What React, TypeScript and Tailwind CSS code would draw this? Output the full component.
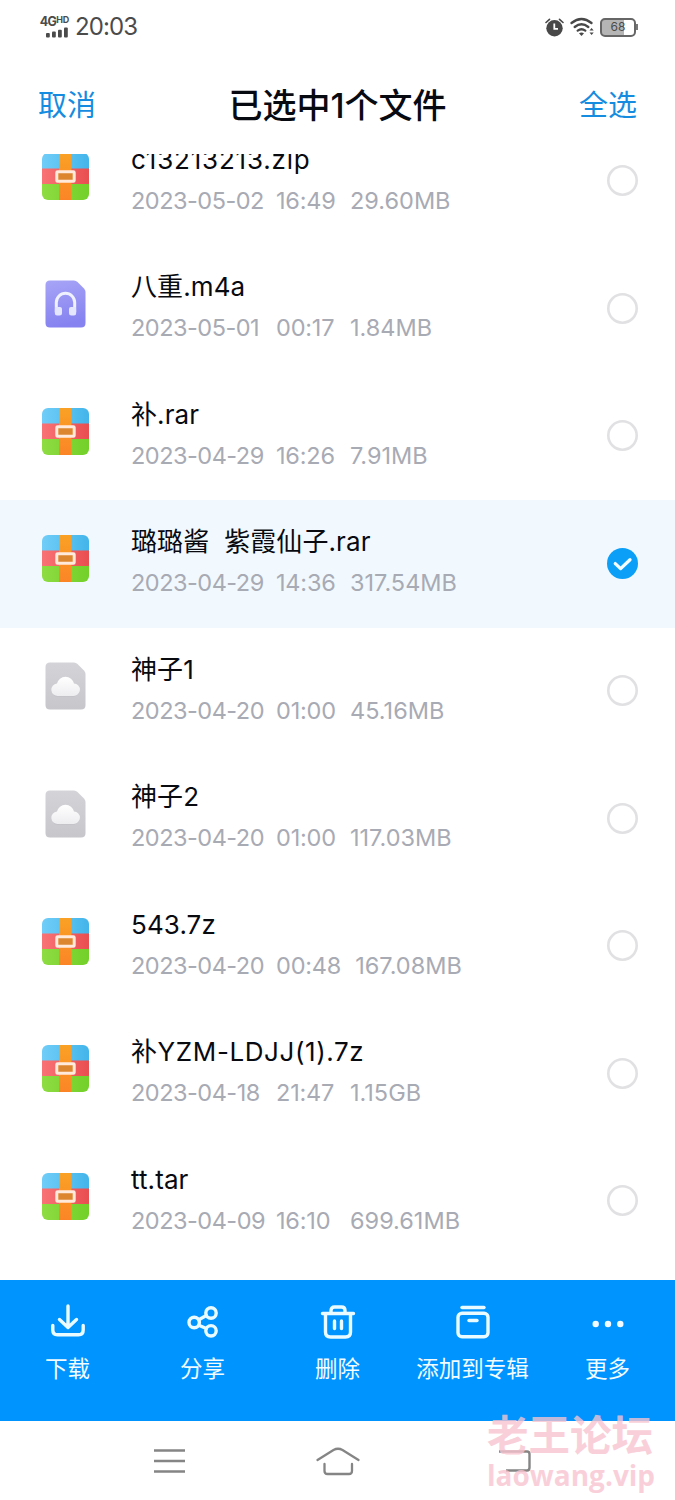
import { useState } from 'react';

type FileKind = 'archive' | 'audio' | 'unknown';

interface FileItem {
    id: number;
    name: string;
    date: string;
    time: string;
    size: string;
    kind: FileKind;
    nameClass?: string;
}

const files: FileItem[] = [
    { id: 1, name: 'c13213213.zip', date: '2023-05-02', time: '16:49', size: '29.60MB', kind: 'archive', nameClass: 'tracking-[0.8px]' },
    { id: 2, name: '八重.m4a', date: '2023-05-01', time: '00:17', size: '1.84MB', kind: 'audio' },
    { id: 3, name: '补.rar', date: '2023-04-29', time: '16:26', size: '7.91MB', kind: 'archive' },
    { id: 4, name: '璐璐酱  紫霞仙子.rar', date: '2023-04-29', time: '14:36', size: '317.54MB', kind: 'archive' },
    { id: 5, name: '神子1', date: '2023-04-20', time: '01:00', size: '45.16MB', kind: 'unknown' },
    { id: 6, name: '神子2', date: '2023-04-20', time: '01:00', size: '117.03MB', kind: 'unknown' },
    { id: 7, name: '543.7z', date: '2023-04-20', time: '00:48', size: '167.08MB', kind: 'archive' },
    { id: 8, name: '补YZM-LDJJ(1).7z', date: '2023-04-18', time: '21:47', size: '1.15GB', kind: 'archive', nameClass: 'tracking-[0.6px]' },
    { id: 9, name: 'tt.tar', date: '2023-04-09', time: '16:10', size: '699.61MB', kind: 'archive' },
];

function ArchiveIcon() {
    return (
        <svg width="47" height="47" viewBox="0 0 47 47">
            <defs>
                <clipPath id="box"><rect width="47" height="47" rx="6" /></clipPath>
                <linearGradient id="blue" x1="0" x2="1"><stop stopColor="#70cdf8" /><stop offset="1" stopColor="#43b5ea" /></linearGradient>
                <linearGradient id="red" x1="0" x2="1"><stop stopColor="#f97275" /><stop offset="1" stopColor="#e94e50" /></linearGradient>
                <linearGradient id="green" x1="0" x2="1"><stop stopColor="#8edc42" /><stop offset="1" stopColor="#73d029" /></linearGradient>
                <linearGradient id="strap" x1="0" y1="0" x2="0" y2="1"><stop stopColor="#faa125" /><stop offset="1" stopColor="#fb8526" /></linearGradient>
            </defs>
            <g clipPath="url(#box)">
                <rect width="47" height="16" fill="url(#blue)" />
                <rect y="15.5" width="47" height="16" fill="url(#red)" />
                <rect y="31" width="47" height="16" fill="url(#green)" />
                <rect x="17" width="12.5" height="47" fill="url(#strap)" />
            </g>
            <rect x="14.8" y="18.8" width="17.4" height="9.4" rx="0.8" fill="#dd8630" stroke="#ffeadb" strokeWidth="3" />
        </svg>
    );
}

function AudioIcon() {
    return (
        <svg width="41" height="48" viewBox="0 0 41 48">
            <defs>
                <linearGradient id="violet" x1="0" y1="0" x2="0.2" y2="1"><stop stopColor="#a7a5f7" /><stop offset="1" stopColor="#8682f0" /></linearGradient>
            </defs>
            <path d="M5 0.5H29Q31 0.5 32.5 2L39 8.5Q40.5 10 40.5 12V43Q40.5 47.5 36 47.5H5Q0.5 47.5 0.5 43V5Q0.5 0.5 5 0.5Z" fill="url(#violet)" />
            <path d="M11.3 32V22.5A9.2 9.2 0 0 1 29.7 22.5V32" fill="none" stroke="#f0f1fe" strokeWidth="3" />
            <path d="M10 27H15Q17 27 17 29V33Q17 35.5 14.5 35.5H12Q9.8 35.5 9.8 33Z" fill="#e4e6fd" />
            <path d="M31 27H26Q24 27 24 29V33Q24 35.5 26.5 35.5H29Q31.2 35.5 31.2 33Z" fill="#e4e6fd" />
        </svg>
    );
}

function UnknownIcon() {
    return (
        <svg width="41" height="48" viewBox="0 0 41 48">
            <defs>
                <linearGradient id="gray" x1="0" y1="0" x2="0" y2="1"><stop stopColor="#d4d4d8" /><stop offset="1" stopColor="#c6c6cb" /></linearGradient>
                <linearGradient id="cloud" x1="0" y1="0" x2="0" y2="1"><stop stopColor="#ffffff" /><stop offset="1" stopColor="#ededf0" /></linearGradient>
            </defs>
            <path d="M5 0.5H29Q31 0.5 32.5 2L39 8.5Q40.5 10 40.5 12V43Q40.5 47.5 36 47.5H5Q0.5 47.5 0.5 43V5Q0.5 0.5 5 0.5Z" fill="url(#gray)" />
            <path d="M13 34.6A6 6 0 0 1 12.5 22.4A8.3 8.3 0 0 1 28.5 22.4A6 6 0 0 1 28.5 34.6Z" fill="#bdbdc3" />
            <path d="M13 34A6.2 6.2 0 0 1 12 21.6A8.7 8.7 0 0 1 29 21.6A6.2 6.2 0 0 1 28.5 34Z" fill="url(#cloud)" />
        </svg>
    );
}

const kindIcons = {
    archive: ArchiveIcon,
    audio: AudioIcon,
    unknown: UnknownIcon,
};

function StatusBar() {
    return (
        <div className="flex h-[54px] shrink-0 items-center justify-between pr-[37px] pl-[39px] text-[#4b4b4b]">
            <div className="flex items-center gap-[6px]">
                <div className="flex w-[30px] flex-col items-end">
                    <div className="flex h-[11px] items-start text-[12.5px] leading-[11px] font-bold tracking-[-0.7px]">
                        4G<span className="text-[9px] leading-[8px] tracking-[-0.2px]">HD</span>
                    </div>
                    <svg width="24" height="11" viewBox="0 0 24 11" fill="currentColor">
                        <rect x="1" y="6" width="3.8" height="4.5" rx="1" />
                        <rect x="7" y="4.5" width="3.8" height="6" rx="1" />
                        <rect x="13" y="2.8" width="3.8" height="7.7" rx="1" />
                        <rect x="19" y="0.5" width="3.8" height="10" rx="1" />
                    </svg>
                </div>
                <span className="text-[24px] leading-[30px] tracking-[-0.9px]">20:03</span>
            </div>
            <div className="flex items-center">
                <svg width="19" height="19" viewBox="0 0 19 19" fill="none">
                    <circle cx="9.5" cy="10.2" r="8.2" fill="#484848" />
                    <path d="M1 4.5L4.5 1.3M18 4.5L14.5 1.3" stroke="#484848" strokeWidth="1.6" strokeLinecap="round" />
                    <path d="M9.3 5.5V10.8H13" stroke="#fff" strokeWidth="1.8" />
                </svg>
                <svg width="25" height="20" viewBox="0 0 25 20" fill="none" className="ml-[6px]">
                    <path d="M1.5 6Q11.5 -2 21.5 6M4.7 10Q11.5 4.5 18.3 10M7.7 13.6Q11.5 10.8 15.3 13.6" stroke="#484848" strokeWidth="2.3" strokeLinecap="round" />
                    <path d="M9 16.2Q11.5 14.6 14 16.2L11.5 19Z" fill="#484848" />
                    <path d="M19.5 13.5L21.6 11L23.7 13.5ZM19.5 15.5L21.6 18L23.7 15.5Z" fill="#484848" />
                </svg>
                <div className="ml-[5px] flex items-center">
                    <div className="flex h-[19px] w-[36px] items-center justify-center rounded-[5px] border-2 border-[#666] bg-linear-to-r from-[#b5b5b5] from-68% to-white to-68% text-[12px] leading-none">
                        68
                    </div>
                    <div className="h-[6px] w-[2px] bg-[#777]" />
                </div>
            </div>
        </div>
    );
}

function Checkbox({ checked }: { checked: boolean }) {
    if (!checked) {
        return (
            <svg width="31" height="31" viewBox="0 0 31 31">
                <circle cx="15.5" cy="15.5" r="14.2" fill="#fff" stroke="#e1e0e3" strokeWidth="2.6" />
            </svg>
        );
    }
    return (
        <svg width="31" height="31" viewBox="0 0 31 31" fill="none">
            <circle cx="15.5" cy="15.5" r="15.5" fill="#0c9ff7" />
            <path d="M8.3 15.6L13.6 20.6L23 11.7" stroke="#f3fdff" strokeWidth="3.3" strokeLinecap="round" strokeLinejoin="round" />
        </svg>
    );
}

function FileRow({ file, checked, onToggle }: { file: FileItem; checked: boolean; onToggle: () => void }) {
    const Icon = kindIcons[file.kind];
    return (
        <div
            onClick={onToggle}
            className={`flex h-[127.5px] shrink-0 items-start pr-[37px] ${checked ? 'bg-[#f1f9fe]' : 'bg-white'}`}
        >
            <div className="flex h-[117px] w-[131px] shrink-0 items-center justify-center">
                <Icon />
            </div>
            <div className="flex-1 pt-[25px]">
                <div className={`h-[34px] text-[26px] leading-[34px] whitespace-pre text-[#090a10] ${file.nameClass ?? 'tracking-[0.1px]'}`}>
                    {file.name}
                </div>
                <div className="mt-[9px] flex h-[30px] text-[23.5px] leading-[30px] text-[#a8aab4]">
                    <span className="w-[145px] tracking-[-0.5px]">{file.date}</span>
                    <span className="mr-[14px] min-w-[60px] tracking-[-0.2px]">{file.time}</span>
                    <span>{file.size}</span>
                </div>
            </div>
            <div className="pt-[47.5px]">
                <Checkbox checked={checked} />
            </div>
        </div>
    );
}

const actions = [
    {
        label: '下载',
        icon: (
            <>
                <path d="M18 2V23M9.5 15.5L18 23.5L26.5 15.5" />
                <path d="M2.8 21.5V26Q2.8 30.8 7.5 30.8H28.5Q33.2 30.8 33.2 26V21.5" />
            </>
        ),
    },
    {
        label: '分享',
        icon: (
            <>
                <circle cx="9.2" cy="18.5" r="5.2" />
                <circle cx="26" cy="9" r="5.2" />
                <circle cx="26" cy="26.8" r="5.2" />
                <path d="M13.8 15.8L21.3 11.6M13.8 21.2L21.3 24.5" />
            </>
        ),
    },
    {
        label: '删除',
        icon: (
            <>
                <path d="M2.5 9.5H33.5M11 9V6.5Q11 3 14.5 3H21.5Q25 3 25 6.5V9" />
                <path d="M5.5 10V28Q5.5 33 10.5 33H25.5Q30.5 33 30.5 28V10" />
                <path d="M14.5 17V24.5M21.5 17V24.5" />
            </>
        ),
    },
    {
        label: '添加到专辑',
        icon: (
            <>
                <path d="M7 3.5H29" />
                <rect x="3" y="9.2" width="30" height="23.5" rx="4" />
                <path d="M14 16.5H22" />
            </>
        ),
    },
    {
        label: '更多',
        icon: (
            <g fill="#f2fbff" stroke="none">
                <circle cx="5.7" cy="20" r="3.2" />
                <circle cx="18" cy="20" r="3.2" />
                <circle cx="30.3" cy="20" r="3.2" />
            </g>
        ),
    },
];

function ActionBar() {
    return (
        <div className="grid h-[141px] shrink-0 grid-cols-5 bg-[#0094ff] pt-[24px]">
            {actions.map(action => (
                <button key={action.label} className="flex flex-col items-center">
                    <svg width="36" height="36" viewBox="0 0 36 36" fill="none" stroke="#e9fbff" strokeWidth="3.4" strokeLinecap="round" strokeLinejoin="round">
                        {action.icon}
                    </svg>
                    <span className="mt-[13px] text-[22.5px] leading-[32px] whitespace-nowrap text-[#f0fcff]">{action.label}</span>
                </button>
            ))}
        </div>
    );
}

function SystemNav() {
    return (
        <div className="grid h-[79px] shrink-0 grid-cols-[169px_169px_185px] items-center justify-center justify-items-center bg-white pl-[17px]">
            <svg width="31" height="26" viewBox="0 0 31 26" stroke="#858585" strokeWidth="2.5">
                <path d="M0 2.5H31M0 13H31M0 23.5H31" />
            </svg>
            <svg width="44" height="30" viewBox="0 0 44 30" fill="none" stroke="#858585" strokeWidth="2.3" strokeLinecap="round" strokeLinejoin="round">
                <path d="M1.5 14L17.5 4Q22 1.5 26.5 4L42.5 14" />
                <path d="M8.5 18V25Q8.5 28 11.5 28H33Q36 28 36 25V18" />
            </svg>
            <svg width="32" height="24" viewBox="0 0 32 24" fill="none" stroke="#858585" strokeWidth="2.4">
                <path d="M0 2.5H28Q30.5 2.5 30.5 5V18.5Q30.5 21.5 28 21.5H7" />
            </svg>
        </div>
    );
}

export default function App() {
    const [selected, setSelected] = useState<number[]>([4]);

    const toggle = (id: number) => {
        setSelected(prev => (prev.includes(id) ? prev.filter(x => x !== id) : [...prev, id]));
    };

    return (
        <div className="relative flex h-[1500px] w-[675px] flex-col overflow-hidden bg-white font-['Inter','Noto_Sans_CJK_SC',sans-serif]">
            <StatusBar />
            <header className="flex h-[100px] shrink-0 items-center justify-between px-[38px] pt-[3px]">
                <button onClick={() => setSelected([])} className="text-[29px] leading-[40px] text-[#168ce0]">取消</button>
                <h1 className="text-[34px] leading-[44px] font-medium text-[#080a12]">已选中{selected.length}个文件</h1>
                <button onClick={() => setSelected(files.map(f => f.id))} className="text-[29px] leading-[40px] text-[#168ce0]">全选</button>
            </header>

            <main className="min-h-0 flex-1 overflow-hidden">
                <div className="-mt-[36.5px] flex flex-col">
                    {files.map(file => (
                        <FileRow key={file.id} file={file} checked={selected.includes(file.id)} onToggle={() => toggle(file.id)} />
                    ))}
                </div>
            </main>

            <ActionBar />
            <SystemNav />

            <div className="pointer-events-none absolute top-[1410px] left-[487px] flex flex-col font-['Open_Sans','Noto_Sans_CJK_SC',sans-serif] font-bold text-[#f8c4d0]/80">
                <span className="text-[41.5px] leading-[50px]">老王论坛</span>
                <span className="-mt-px text-[28px] leading-[32px]">laowang.vip</span>
            </div>
        </div>
    );
}
